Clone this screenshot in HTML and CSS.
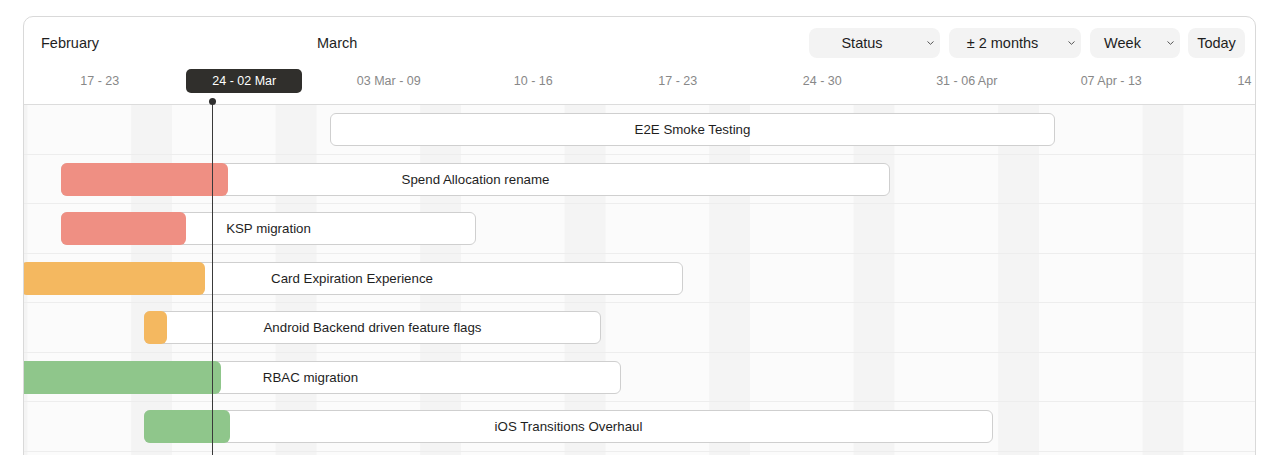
FILE: index.html
```html
<!DOCTYPE html>
<html lang="en">
<head>
<meta charset="utf-8">
<title>Roadmap timeline</title>
<link rel="stylesheet" href="styles.css">
</head>
<body>
<div class="card">
  <header class="head">
    <div class="toprow">
      <div class="months">
        <span class="month month-feb">February</span>
        <span class="month">March</span>
      </div>
      <div class="controls">
        <button class="select w-status"><span class="select-text">Status</span><span class="chev"><svg width="7" height="4" viewBox="0 0 7 4"><path d="M0.5 0.5 L3.5 3.3 L6.5 0.5" fill="none" stroke="#555" stroke-width="1"/></svg></span></button>
        <button class="select w-range"><span class="select-text">± 2 months</span><span class="chev"><svg width="7" height="4" viewBox="0 0 7 4"><path d="M0.5 0.5 L3.5 3.3 L6.5 0.5" fill="none" stroke="#555" stroke-width="1"/></svg></span></button>
        <button class="select w-week"><span class="select-text">Week</span><span class="chev"><svg width="7" height="4" viewBox="0 0 7 4"><path d="M0.5 0.5 L3.5 3.3 L6.5 0.5" fill="none" stroke="#555" stroke-width="1"/></svg></span></button>
        <button class="today-btn">Today</button>
      </div>
    </div>
    <div class="weeks">
      <div class="wk">17 - 23</div>
      <div class="wk"><span class="pill">24 - 02 Mar</span></div>
      <div class="wk">03 Mar - 09</div>
      <div class="wk">10 - 16</div>
      <div class="wk">17 - 23</div>
      <div class="wk">24 - 30</div>
      <div class="wk">31 - 06 Apr</div>
      <div class="wk">07 Apr - 13</div>
      <div class="wk wk-last">14</div>
    </div>
  </header>
  <div class="grid">
    <div class="row">
      <div class="bar" style="margin-left:306px;width:725px"><span class="label">E2E Smoke Testing</span></div>
    </div>
    <div class="row">
      <div class="bar" style="margin-left:37px;width:829px"><span class="fill red" style="width:167px"></span><span class="label">Spend Allocation rename</span></div>
    </div>
    <div class="row">
      <div class="bar" style="margin-left:37px;width:415px"><span class="fill red" style="width:125px"></span><span class="label">KSP migration</span></div>
    </div>
    <div class="row">
      <div class="bar" style="margin-left:-3px;width:662px"><span class="fill orange" style="width:184px"></span><span class="label">Card Expiration Experience</span></div>
    </div>
    <div class="row">
      <div class="bar" style="margin-left:120px;width:457px"><span class="fill orange" style="width:23px"></span><span class="label">Android Backend driven feature flags</span></div>
    </div>
    <div class="row">
      <div class="bar" style="margin-left:-24px;width:621px"><span class="fill green" style="width:221px"></span><span class="label">RBAC migration</span></div>
    </div>
    <div class="row">
      <div class="bar" style="margin-left:120px;width:849px"><span class="fill green" style="width:86px"></span><span class="label">iOS Transitions Overhaul</span></div>
    </div>
    <div class="row"></div>
  </div>
  <div class="now-line"><span class="now-dot"></span></div>
</div>
</body>
</html>
```
FILE: styles.css
```css
* { box-sizing: border-box; }
html, body {
  margin: 0;
  padding: 0;
  background: #fff;
}
body {
  padding: 16px 0 0 23px;
  font-family: "Liberation Sans", Arial, Helvetica, sans-serif;
  color: #1e1e1e;
  overflow: hidden;
}
.card {
  position: relative;
  width: 1233px;
  border: 1px solid #d9d9d9;
  border-radius: 10px 10px 0 0;
  overflow: hidden;
  background: #fff;
}
.head {
  padding-top: 11px;
  border-bottom: 1px solid #dcdcdc;
}
.toprow {
  display: flex;
  align-items: center;
  height: 30px;
  padding-right: 10px;
}
.months {
  display: flex;
  align-items: center;
  padding-left: 17px;
  padding-bottom: 1px;
  font-size: 14.5px;
  color: #1e1e1e;
}
.month-feb { width: 276px; }
.controls {
  margin-left: auto;
  display: flex;
  align-items: center;
  gap: 9px;
}
.select, .today-btn {
  height: 30px;
  border: 0;
  border-radius: 8px;
  background: #f3f3f3;
  font-family: inherit;
  font-size: 14.5px;
  color: #1e1e1e;
  padding: 0;
  display: flex;
  align-items: center;
}
.select-text {
  flex: 1;
  text-align: center;
}
.chev {
  width: 25px;
  display: flex;
  justify-content: flex-end;
  padding-right: 6px;
}
.chev svg { display: block; }
.w-status { width: 131px; }
.w-range { width: 132px; }
.w-week { width: 90px; margin-right: -1px; }
.today-btn {
  width: 57px;
  justify-content: center;
}
.weeks {
  display: grid;
  grid-template-columns: repeat(9, 144.5px);
  padding-left: 3.5px;
  height: 46px;
  align-items: center;
}
.wk {
  text-align: center;
  font-size: 12.5px;
  color: #888;
  white-space: nowrap;
  display: flex;
  justify-content: center;
}
.wk-last {
  justify-content: flex-start;
  padding-left: 54px;
}
.pill {
  width: 116px;
  height: 24px;
  line-height: 24px;
  border-radius: 5px;
  background: #302f2c;
  color: #fff;
  text-align: center;
}
.grid {
  background-color: #fbfbfb;
  background-image: linear-gradient(90deg, transparent 0, transparent 103.2px, #f4f4f4 103.2px, #f4f4f4 144.5px);
  background-size: 144.5px 100%;
  background-position: 3.5px 0;
  background-repeat: repeat-x;
}
.row {
  height: 49.5px;
  border-bottom: 1px solid #ededed;
  display: flex;
  align-items: center;
  padding-top: 1px;
}
.bar {
  flex: none;
  height: 33px;
  border: 1px solid #cfcfcf;
  border-radius: 6px;
  background: #fff;
  display: grid;
}
.fill, .label {
  grid-area: 1 / 1;
}
.fill {
  justify-self: start;
  margin: -1px 0 -1px -1px;
  border-radius: 6px;
}
.red { background: #ef8f83; }
.orange { background: #f4b860; }
.green { background: #8fc68b; }
.label {
  align-self: center;
  justify-self: center;
  font-size: 13.3px;
  color: #1e1e1e;
  white-space: nowrap;
}
.now-line {
  position: absolute;
  left: 188px;
  top: 84px;
  bottom: 0;
  width: 1px;
  background: #3a3a3a;
}
.now-dot {
  position: absolute;
  left: -3px;
  top: -3px;
  width: 7px;
  height: 7px;
  border-radius: 50%;
  background: #2f2f2f;
}
```
